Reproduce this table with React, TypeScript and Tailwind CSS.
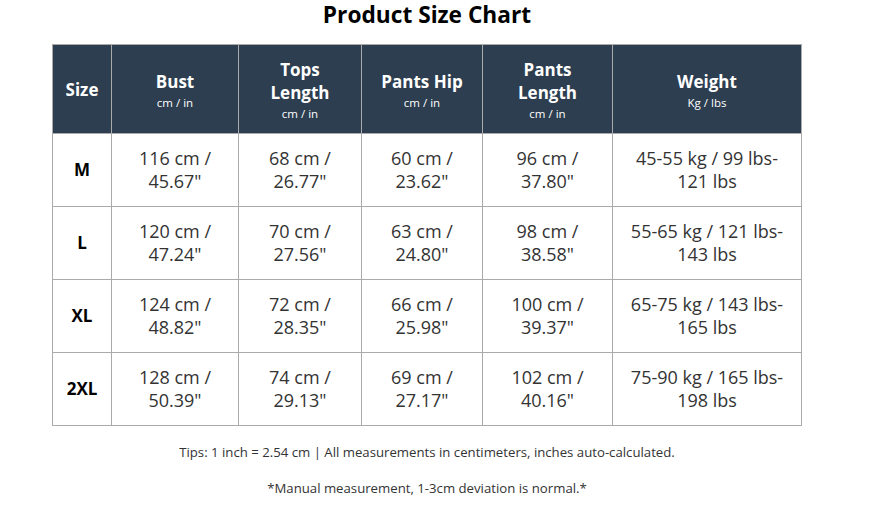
import React from "react";

const rows = [
  ["M", '116 cm /\n45.67"', '68 cm /\n26.77"', '60 cm /\n23.62"', '96 cm /\n37.80"', "45-55 kg / 99 lbs-\n121 lbs"],
  ["L", '120 cm /\n47.24"', '70 cm /\n27.56"', '63 cm /\n24.80"', '98 cm /\n38.58"', "55-65 kg / 121 lbs-\n143 lbs"],
  ["XL", '124 cm /\n48.82"', '72 cm /\n28.35"', '66 cm /\n25.98"', '100 cm /\n39.37"', "65-75 kg / 143 lbs-\n165 lbs"],
  ["2XL", '128 cm /\n50.39"', '74 cm /\n29.13"', '69 cm /\n27.17"', '102 cm /\n40.16"', "75-90 kg / 165 lbs-\n198 lbs"],
];

const headers: [string[], string | null][] = [
  [["Size"], null],
  [["Bust"], "cm / in"],
  [["Tops", "Length"], "cm / in"],
  [["Pants Hip"], "cm / in"],
  [["Pants", "Length"], "cm / in"],
  [["Weight"], "Kg / lbs"],
];

const widths = ["w-[59px]", "w-[127px]", "w-[123px]", "w-[121px]", "w-[130px]", "w-[189px]"];

export default function App() {
  return (
    <div
      className="w-[854px] bg-white text-[#333]"
      style={{ fontFamily: '"Open Sans", "Noto Sans", sans-serif' }}
    >
      <h1 className="text-center text-[22.7px] font-bold leading-[30px] text-black">
        Product Size Chart
      </h1>
      <table className="mx-auto mt-[14px] w-[750px] table-fixed border-collapse">
        <colgroup>
          {widths.map((w, i) => (
            <col key={i} className={w} />
          ))}
        </colgroup>
        <thead>
          <tr className="h-[89px] bg-[#2c3e50] text-white">
            {headers.map(([lines, sub], i) => (
              <th
                key={i}
                className={
                  "border border-[#aaaaaa] p-0 text-center align-middle " + (sub ? "pt-[2px]" : "")
                }
              >
                {lines.map((l, j) => (
                  <div key={j} className="text-[17px] font-bold leading-[23px]">
                    {l}
                  </div>
                ))}
                {sub && (
                  <div className="mt-[2px] text-[11.5px] font-normal leading-[16px]">{sub}</div>
                )}
              </th>
            ))}
          </tr>
        </thead>
        <tbody>
          {rows.map((r, ri) => (
            <tr key={ri} className="h-[73px]">
              {r.map((c, ci) => (
                <td
                  key={ci}
                  className={
                    "border border-[#aaaaaa] p-0 text-center align-middle whitespace-pre-line " +
                    (ci === 0
                      ? "text-[17px] font-bold text-black"
                      : "text-[18px] leading-[23px]")
                  }
                >
                  {c}
                </td>
              ))}
            </tr>
          ))}
        </tbody>
      </table>
      <p className="mt-[16px] text-center text-[13.2px] leading-[20px]">
        Tips: 1 inch = 2.54 cm | All measurements in centimeters, inches auto-calculated.
      </p>
      <p className="mt-[16px] text-center text-[13.2px] leading-[20px]">
        *Manual measurement, 1-3cm deviation is normal.*
      </p>
    </div>
  );
}
